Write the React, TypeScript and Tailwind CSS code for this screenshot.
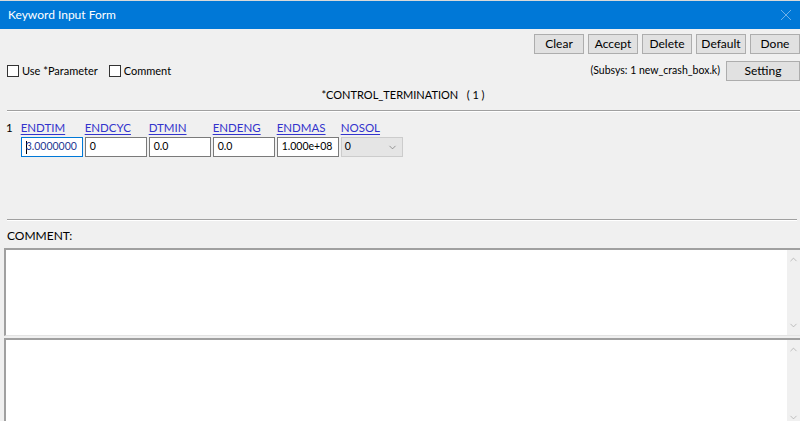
import { ChevronDown, ChevronUp } from "lucide-react";

const FIELDS = [
  { name: "ENDTIM", value: "3.0000000" },
  { name: "ENDCYC", value: "0" },
  { name: "DTMIN", value: "0.0" },
  { name: "ENDENG", value: "0.0" },
  { name: "ENDMAS", value: "1.000e+08" },
];

const ACTIONS = ["Clear", "Accept", "Delete", "Default", "Done"];

function Btn({ label, w = "w-[50px]" }: { label: string; w?: string }) {
  return (
    <div
      className={`${w} h-[20px] flex items-center justify-center bg-[#e1e1e1] border border-[#adadad] text-[12px] text-black`}
    >
      {label}
    </div>
  );
}

function Check({ label }: { label: string }) {
  return (
    <div className="flex items-center gap-[3px]">
      <div className="w-[12px] h-[12px] bg-white border border-[#333333]" />
      <span>{label}</span>
    </div>
  );
}

function Divider() {
  return (
    <div className="flex flex-col">
      <div className="h-px bg-[#a0a0a0]" />
      <div className="h-px bg-white" />
    </div>
  );
}

function TextBox({ h }: { h: string }) {
  return (
    <div className={`${h} flex bg-white border-t-2 border-l-2 border-[#a0a0a0] border-b border-b-[#e3e3e3]`}>
      <div className="flex-1" />
      <div className="w-[13px] bg-[#f0f0f0] flex flex-col justify-between items-center py-[4px] text-[#a6a6a6]">
        <ChevronUp size={11} strokeWidth={1.5} />
        <ChevronDown size={11} strokeWidth={1.5} />
      </div>
    </div>
  );
}

export default function App() {
  return (
    <div
      className="w-[800px] h-[421px] bg-[#f0f0f0] overflow-hidden text-[11px] text-black"
      style={{ fontFamily: 'Lato, "Noto Sans", sans-serif' }}
    >
      {/* Title bar */}
      <div className="h-px bg-[#d9d9d9]" />
      <div className="h-[28px] bg-[#0078d7] flex items-center justify-between pl-[8px] pr-[4px] text-white">
        <span className="text-[12px]">Keyword Input Form</span>
        <svg width="16" height="16" viewBox="0 0 16 16" className="mr-[2px]">
          <path d="M3 3 L13 13 M13 3 L3 13" stroke="#6fb0e8" strokeWidth="1" />
        </svg>
      </div>

      {/* Action buttons */}
      <div className="mt-[5px] flex justify-end gap-[4px]">
        {ACTIONS.map((a) => (
          <Btn key={a} label={a} />
        ))}
      </div>

      {/* Options row */}
      <div className="mt-[7px] h-[20px] flex items-center justify-between pl-[7px]">
        <div className="flex items-center gap-[11px]">
          <Check label="Use *Parameter" />
          <Check label="Comment" />
        </div>
        <div className="flex items-center gap-[6px]">
          <span className="text-[10.5px]">(Subsys: 1 new_crash_box.k)</span>
          <Btn label="Setting" w="w-[74px]" />
        </div>
      </div>

      {/* Keyword title */}
      <div className="h-[29px] flex items-center justify-center text-[11px]">
        <span className="ml-[6px]">*CONTROL_TERMINATION&nbsp;&nbsp;&nbsp;( 1 )</span>
      </div>

      <div className="ml-[7px]">
        <Divider />
      </div>

      {/* Fields */}
      <div className="h-[107px] pt-[8px] pl-[6px] flex gap-[8px] text-[11.5px]">
        <span className="leading-[16px]">1</span>
        <div className="flex gap-[2px]">
          {FIELDS.map((f, i) => (
            <div key={f.name} className="w-[62px] flex flex-col">
              <span className="h-[17px] leading-[16px] text-[#3333cc] underline underline-offset-2">{f.name}</span>
              <div
                className={`h-[20px] flex items-center bg-white px-[4px] text-[10.5px] ${
                  i === 0 ? "border border-[#0078d7] text-[#1f3a93]" : "border border-[#7a7a7a]"
                }`}
              >
                {i === 0 && <span className="w-px h-[13px] bg-black -mr-px" />}
                <span>{f.value}</span>
              </div>
            </div>
          ))}
          <div className="w-[62px] flex flex-col">
            <span className="h-[17px] leading-[16px] text-[#3333cc] underline underline-offset-2">NOSOL</span>
            <div className="h-[20px] flex items-center justify-between bg-[#e5e5e5] border border-[#cccccc] pl-[3px] pr-[4px] text-[10.5px]">
              <span>0</span>
              <ChevronDown size={11} strokeWidth={1.5} className="text-[#707070]" />
            </div>
          </div>
        </div>
      </div>

      <div className="ml-[7px] mr-[3px]">
        <Divider />
      </div>

      {/* Comment */}
      <div className="h-[27px] flex items-center pt-[2px] pl-[7px] text-[12px]">COMMENT:</div>
      <div className="pl-[4px]">
        <TextBox h="h-[88px]" />
      </div>
      <div className="pl-[4px] mt-[2px]">
        <TextBox h="h-[90px]" />
      </div>
    </div>
  );
}
